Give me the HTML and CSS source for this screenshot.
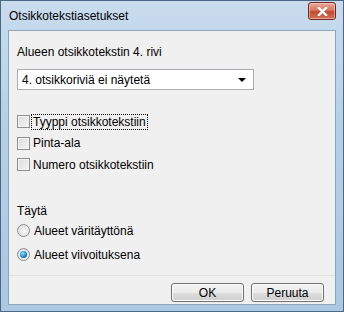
FILE: index.html
```html
<!DOCTYPE html>
<html lang="fi">
<head>
    <meta charset="UTF-8">
    <title>Otsikkotekstiasetukset</title>
    <link rel="stylesheet" href="styles.css">
</head>
<body>
    <div class="window">
        <div class="titlebar">
            <span class="title">Otsikkotekstiasetukset</span>
            <span class="close">
                <svg width="11" height="9" viewBox="0 0 11 9">
                    <path d="M2 1 L9 8 M9 1 L2 8" stroke="#fff" stroke-width="2.4" stroke-linecap="square"/>
                </svg>
            </span>
        </div>
        <div class="client">
            <div class="content">
                <div class="label">Alueen otsikkotekstin 4. rivi</div>
                <div class="select">
                    <span>4. otsikkoriviä ei näytetä</span>
                    <span class="arrow"></span>
                </div>

                <div class="checks">
                    <label class="check"><span class="box"></span><span class="focus">Tyyppi otsikkotekstiin</span></label>
                    <label class="check"><span class="box"></span><span>Pinta-ala</span></label>
                    <label class="check"><span class="box"></span><span>Numero otsikkotekstiin</span></label>
                </div>

                <div class="label fill">Täytä</div>
                <label class="radio"><span class="dot"></span><span>Alueet väritäyttönä</span></label>
                <label class="radio"><span class="dot on"></span><span>Alueet viivoituksena</span></label>
            </div>
            <div class="footer">
                <button class="btn">OK</button>
                <button class="btn">Peruuta</button>
            </div>
        </div>
    </div>
</body>
</html>
```

FILE: styles.css
```css
html, body {
    margin: 0;
    padding: 0;
}
body {
    font-family: "Liberation Sans", Arial, sans-serif;
    font-size: 12px;
    color: #000;
}
.window {
    width: 344px;
    height: 312px;
    box-sizing: border-box;
    background: linear-gradient(to bottom, #c9dcee 0%, #b6cfe6 40%, #abc8e1 100%);
    border: 1px solid #4a6784;
    display: flex;
    flex-direction: column;
    padding: 0 7px 6px 7px;
}
.titlebar {
    height: 29px;
    display: flex;
    align-items: center;
    justify-content: space-between;
    padding-left: 1px;
}
.title {
    font-size: 12px;
    color: #000;
}
.close {
    width: 26px;
    height: 16px;
    margin-top: -9px;
    margin-right: 0;
    border: 1px solid #6e2a22;
    border-radius: 3px;
    background: linear-gradient(to bottom, #e9a99c 0%, #d9765f 45%, #c04a2f 55%, #d6735a 100%);
    display: flex;
    align-items: center;
    justify-content: center;
    box-shadow: inset 0 0 0 1px rgba(255, 220, 210, 0.5);
}
.client {
    flex: 1;
    background: #f0f0f0;
    border: 1px solid #8da6bf;
    display: flex;
    flex-direction: column;
}
.content {
    flex: 1;
    padding: 14px 0 0 8px;
}
.label {
    height: 15px;
    line-height: 15px;
    margin-bottom: 9px;
}
.select {
    width: 237px;
    height: 21px;
    box-sizing: border-box;
    border: 1px solid #abadb3;
    background: #fff;
    display: flex;
    align-items: center;
    justify-content: space-between;
    padding: 0 7px 0 4px;
}
.arrow {
    width: 0;
    height: 0;
    border-left: 4px solid transparent;
    border-right: 4px solid transparent;
    border-top: 4px solid #000;
}
.checks {
    margin-top: 21px;
}
.check {
    display: flex;
    align-items: center;
    height: 21.5px;
}
.radio {
    display: flex;
    align-items: center;
    height: 24px;
}
.box {
    width: 11px;
    height: 11px;
    border: 1px solid #8e8f8f;
    background: linear-gradient(135deg, #dcdcdc 0%, #f4f4f4 100%);
    box-shadow: inset 0 0 0 1px #f4f4f4;
    margin-right: 3px;
}
.focus {
    outline: 1px dotted #000;
    outline-offset: 0;
    padding: 0 1px;
    margin-left: -1px;
}
.fill {
    margin-top: 28px;
    margin-bottom: 0;
}
.dot {
    width: 11px;
    height: 11px;
    border-radius: 50%;
    border: 1px solid #8e8f8f;
    background: radial-gradient(circle at 60% 60%, #f7f7f7 0%, #d5d5d5 100%);
    margin-right: 4px;
    position: relative;
}
.dot.on::after {
    content: "";
    position: absolute;
    left: 2px;
    top: 2px;
    width: 7px;
    height: 7px;
    border-radius: 50%;
    background: radial-gradient(circle at 40% 35%, #8fe0ff 0%, #1a7fc0 60%, #0a4a7a 100%);
}
.footer {
    height: 29px;
    box-sizing: border-box;
    border-top: 1px solid #dfdfdf;
    display: flex;
    justify-content: flex-end;
    align-items: flex-start;
    gap: 7px;
    padding: 7px 11px 0 0;
}
.btn {
    width: 73px;
    height: 19px;
    font-family: inherit;
    font-size: 12px;
    border: 1px solid #707070;
    border-radius: 3px;
    background: linear-gradient(to bottom, #f2f2f2 0%, #ebebeb 50%, #dddddd 51%, #cfcfcf 100%);
    box-shadow: inset 0 0 0 1px #fcfcfc;
    padding: 0;
}
```
